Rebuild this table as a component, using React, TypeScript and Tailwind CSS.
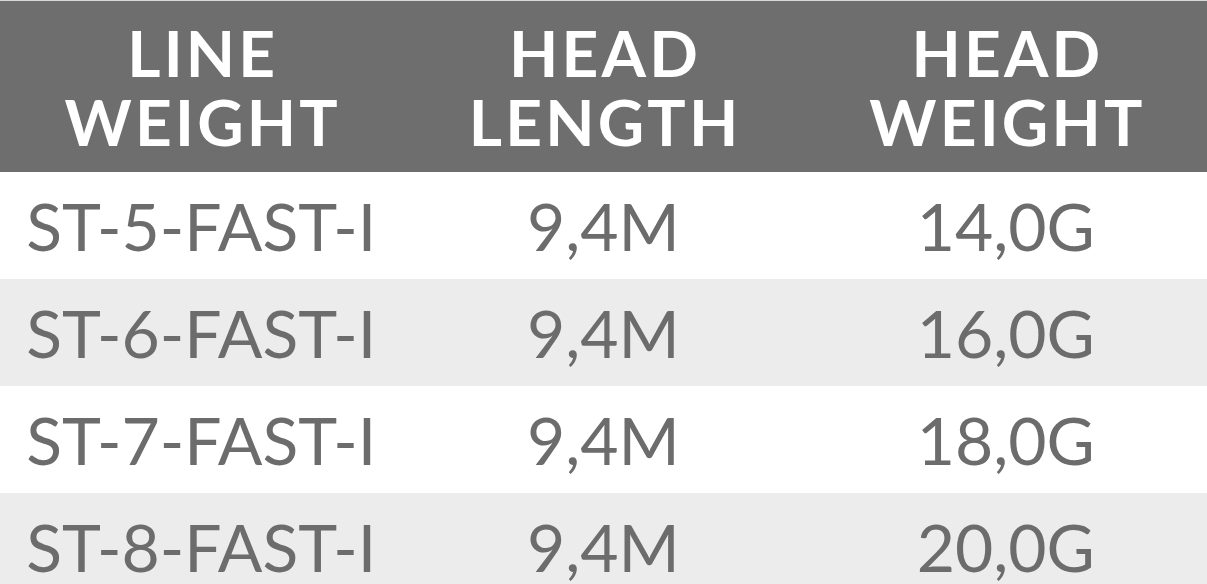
const rows = [
    { line: "ST-5-FAST-I", length: "9,4M", weight: "14,0G" },
    { line: "ST-6-FAST-I", length: "9,4M", weight: "16,0G" },
    { line: "ST-7-FAST-I", length: "9,4M", weight: "18,0G" },
    { line: "ST-8-FAST-I", length: "9,4M", weight: "20,0G" },
];

const headers = [
    ["LINE", "WEIGHT"],
    ["HEAD", "LENGTH"],
    ["HEAD", "WEIGHT"],
];

const App = () => {
    return (
        <div className="w-[1207px] h-[584px] overflow-hidden bg-white font-['Lato','Liberation_Sans',sans-serif]">
            {/* Header */}
            <div className="grid grid-cols-3 h-[172px] bg-[#6e6e6e] border-t border-[#d8d8d8]">
                {headers.map((h, i) => (
                    <div
                        key={i}
                        className="flex flex-col items-center justify-center text-white font-bold text-[64px] leading-[69px] tracking-[0.05em] pl-[0.05em]"
                    >
                        <span>{h[0]}</span>
                        <span>{h[1]}</span>
                    </div>
                ))}
            </div>

            {/* Rows */}
            {rows.map((r, i) => (
                <div
                    key={r.line}
                    className={`grid grid-cols-3 h-[107px] text-[#6c6c6c] font-normal text-[66px] ${
                        i % 2 === 1 ? "bg-[#ececec]" : "bg-white"
                    }`}
                >
                    <div className="flex items-center justify-center">{r.line}</div>
                    <div className="flex items-center justify-center">{r.length}</div>
                    <div className="flex items-center justify-center">{r.weight}</div>
                </div>
            ))}
        </div>
    );
};

export default App;
